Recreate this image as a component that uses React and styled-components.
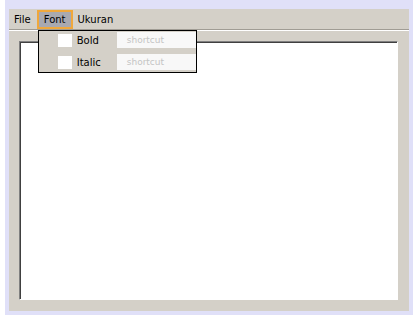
import React from 'react';
import styled, { createGlobalStyle } from 'styled-components';

const GlobalStyle = createGlobalStyle`
  html, body {
    margin: 0;
    padding: 0;
    background: #ffffff;
  }
  body {
    font-family: "DejaVu Sans", "Liberation Sans", sans-serif;
    font-size: 10px;
    color: #000000;
  }
`;

const Window = styled.div`
  margin-left: 5px;
  width: 408px;
  height: 315px;
  box-sizing: border-box;
  border: 4px solid #e0e0f8;
  border-top-width: 9px;
  background: #d4d0c8;
  display: flex;
  flex-direction: column;
`;

const MenuBar = styled.div`
  position: relative;
  display: flex;
  align-items: stretch;
  height: 20px;
  border-bottom: 1px solid #a09c94;
  box-shadow: 0 1px 0 #ffffff;
`;

const MenuItem = styled.div`
  position: relative;
  display: flex;
  align-items: center;
  padding: 0 ${(p) => (p.$active ? '5px' : '3px')};
  margin: 1px ${(p) => (p.$active ? '0 0 1px' : '0')};
  border: 2px solid ${(p) => (p.$active ? '#f0a83c' : 'transparent')};
  background: ${(p) => (p.$active ? '#a9a9b0' : 'transparent')};
  height: 19px;
  box-sizing: border-box;
`;

const Dropdown = styled.div`
  position: absolute;
  top: 18px;
  left: -1px;
  width: 159px;
  box-sizing: border-box;
  border: 1px solid #000000;
  background: #d4d0c8;
  padding: 1px 0 2px 19px;
  display: flex;
  flex-direction: column;
  gap: 6px;
  z-index: 2;
`;

const DropRow = styled.div`
  display: flex;
  align-items: center;
  height: 16px;
`;

const Check = styled.span`
  width: 14px;
  height: 13px;
  margin-top: 1px;
  background: #ffffff;
  margin-right: 5px;
`;

const ItemLabel = styled.span`
  width: 40px;
`;

const Shortcut = styled.span`
  flex: 1;
  height: 16px;
  background: #f8f8f8;
  color: #c4c4c4;
  font-size: 9px;
  display: flex;
  align-items: center;
  padding-left: 10px;
  box-sizing: border-box;
`;

const Body = styled.div`
  flex: 1;
  padding: 10px 11px 11px 10px;
  margin-top: 1px;
  display: flex;
`;

const TextArea = styled.div`
  flex: 1;
  background: #ffffff;
  border-style: solid;
  border-width: 1px;
  border-color: #808080 #ffffff #ffffff #808080;
  box-shadow: inset 1px 1px 0 #404040;
`;

const App = () => {
  const items = ['Bold', 'Italic'];
  return (
    <>
      <GlobalStyle />
      <Window>
        <MenuBar>
          <MenuItem>File</MenuItem>
          <MenuItem $active>
            Font
            <Dropdown>
              {items.map((label) => (
                <DropRow key={label}>
                  <Check />
                  <ItemLabel>{label}</ItemLabel>
                  <Shortcut>shortcut</Shortcut>
                </DropRow>
              ))}
            </Dropdown>
          </MenuItem>
          <MenuItem>Ukuran</MenuItem>
        </MenuBar>
        <Body>
          <TextArea />
        </Body>
      </Window>
    </>
  );
};

export default App;
